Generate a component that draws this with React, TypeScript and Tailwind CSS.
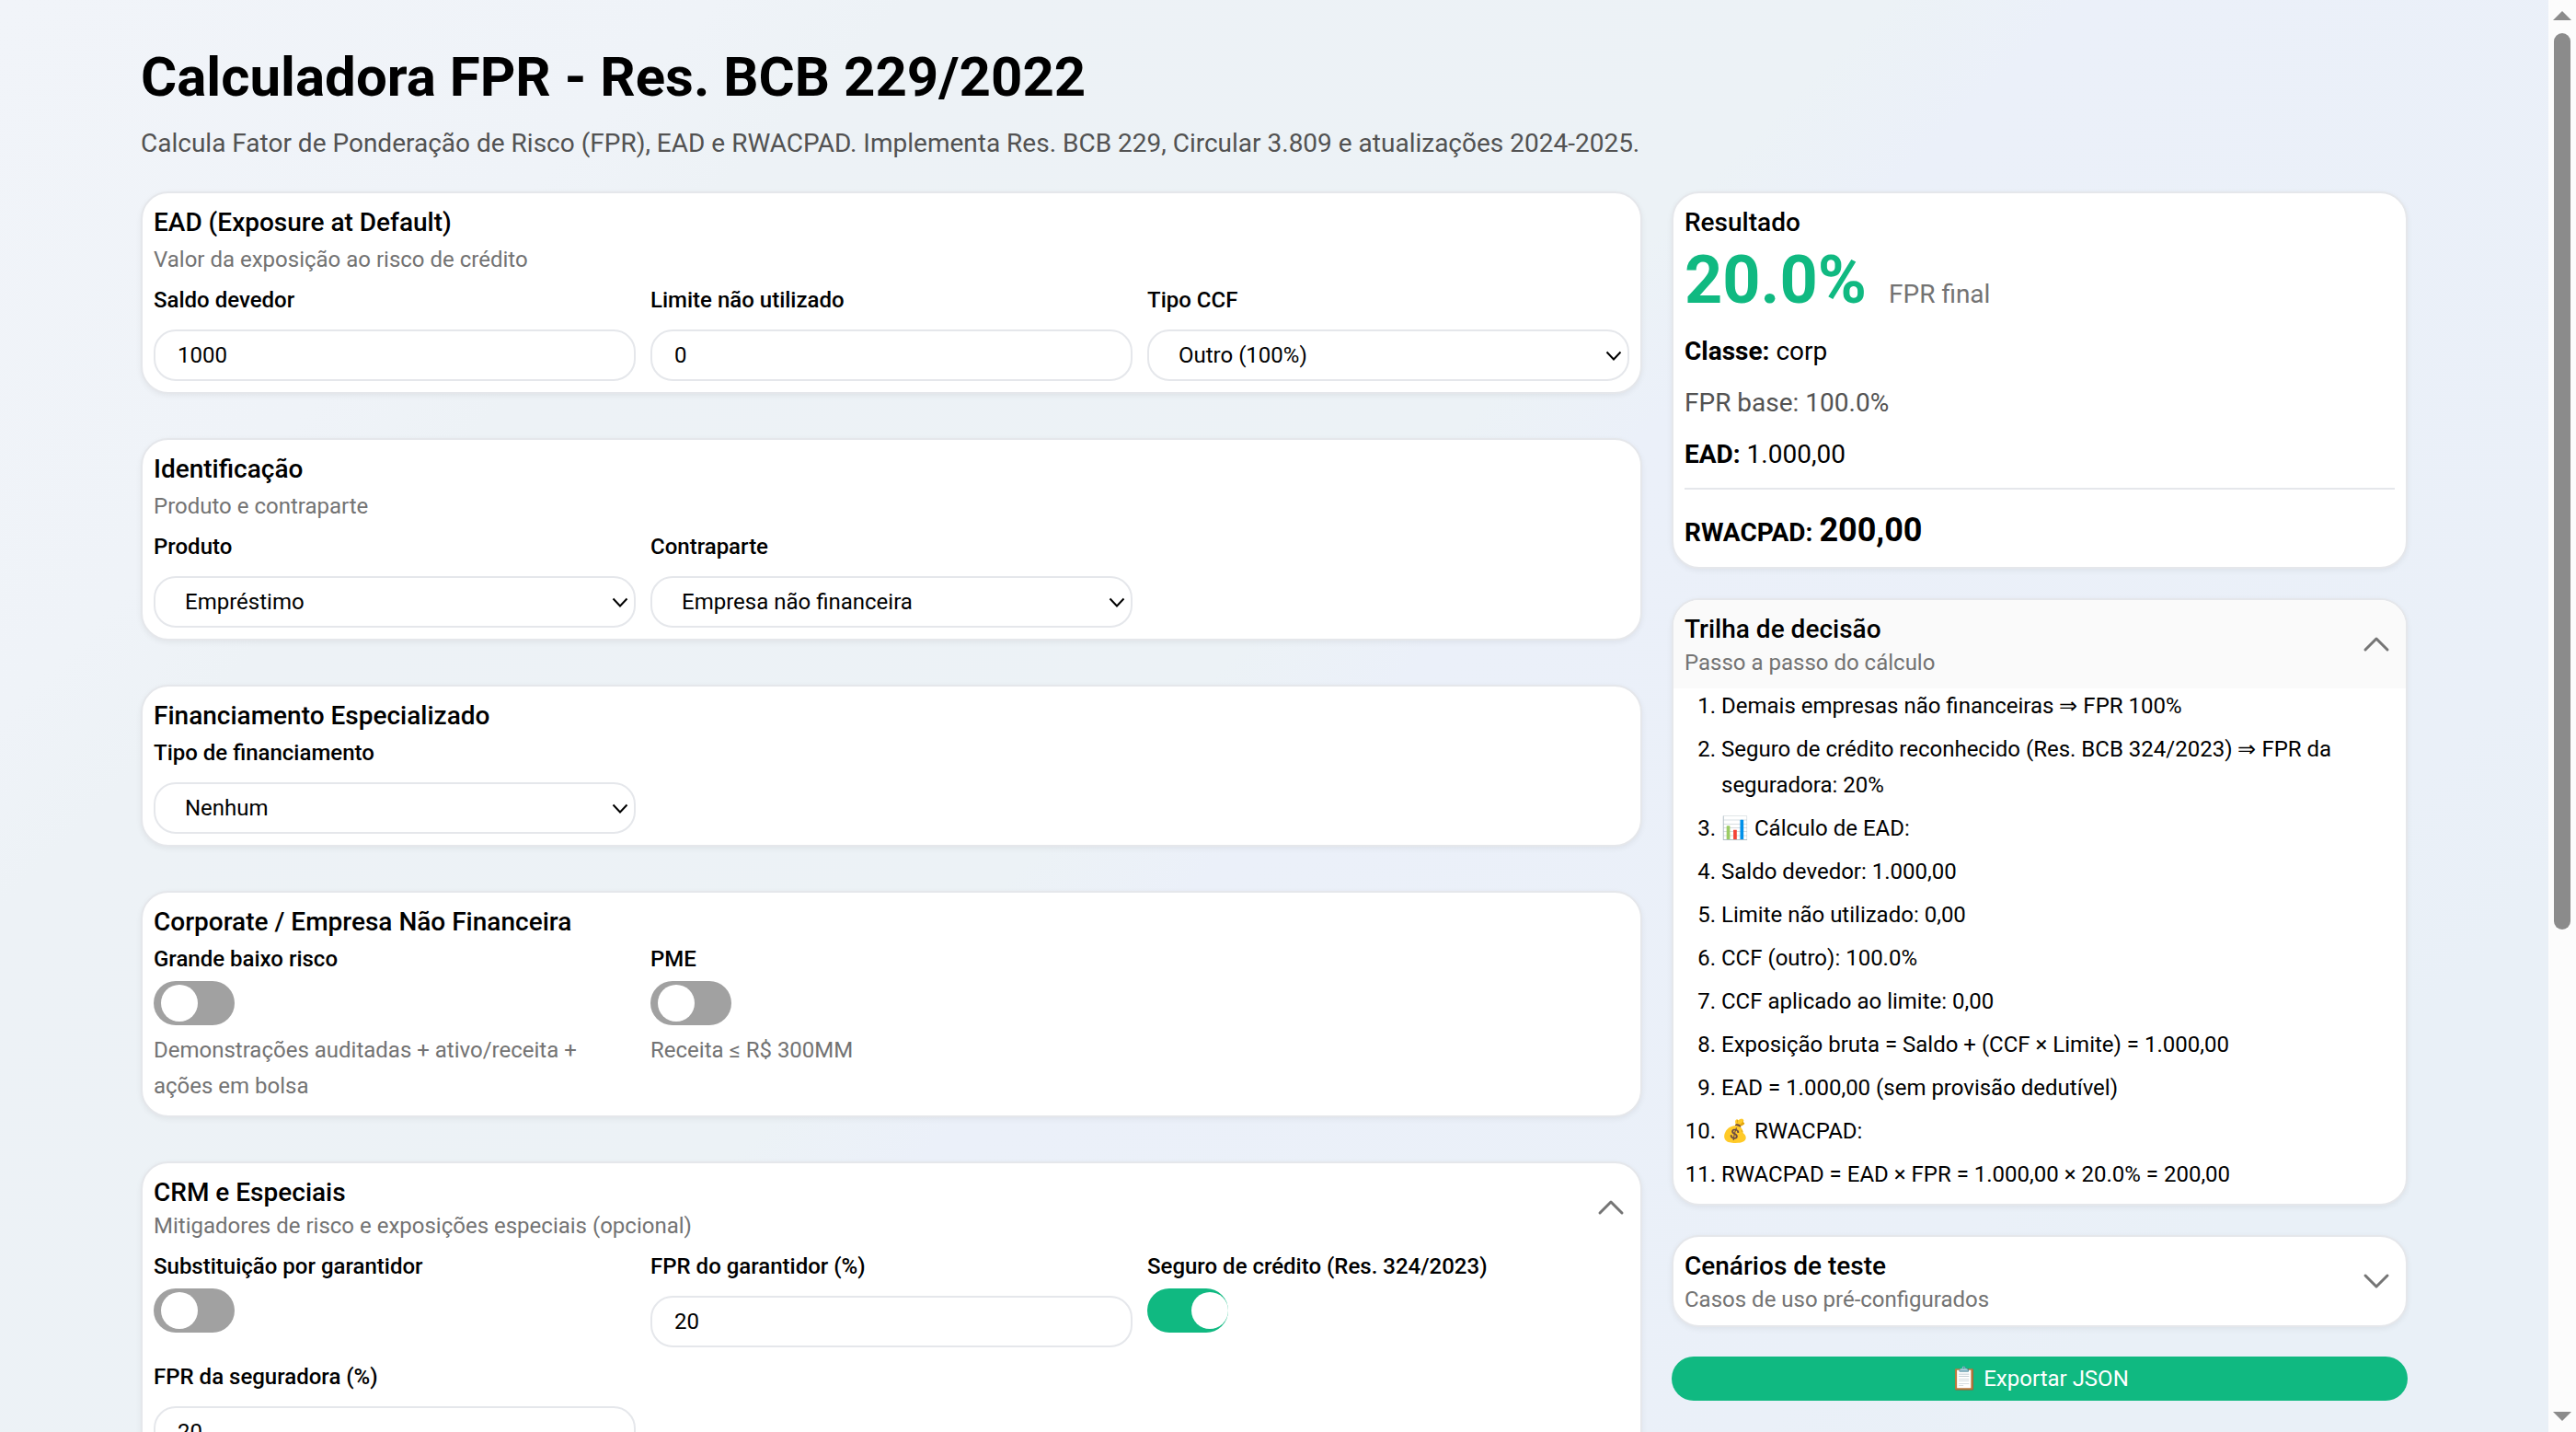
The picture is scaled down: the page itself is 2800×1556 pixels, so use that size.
import { useId, useState, type ReactNode } from 'react';

const cardClass =
  'overflow-hidden rounded-[30px] border-2 border-gray-200 bg-white shadow-[0_2px_6px_rgba(0,0,0,0.06)]';
const titleClass = 'text-[28px] leading-10 font-medium';
const labelClass = 'block text-2xl leading-10 font-medium';
const controlClass =
  'h-14 w-full rounded-3xl border-2 border-gray-200 bg-white text-2xl text-black outline-none';

function Card({ title, subtitle, children }: { title: string; subtitle?: string; children: ReactNode }) {
  return (
    <section className={`${cardClass} p-3`}>
      <h2 className={titleClass}>{title}</h2>
      {subtitle && <p className="mb-1 text-2xl leading-10 text-neutral-500">{subtitle}</p>}
      {children}
    </section>
  );
}

function FieldGrid({ children }: { children: ReactNode }) {
  return <div className="grid grid-cols-3 gap-x-4 gap-y-3">{children}</div>;
}

function TextField({ label, value }: { label: string; value: string }) {
  const id = useId();
  return (
    <div>
      <label htmlFor={id} className={labelClass}>{label}</label>
      <input id={id} type="text" inputMode="decimal" defaultValue={value} className={`${controlClass} mt-3 block px-6`} />
    </div>
  );
}

function SelectField({ label, options }: { label: string; options: string[] }) {
  const id = useId();
  return (
    <div>
      <label htmlFor={id} className={labelClass}>{label}</label>
      <div className="relative mt-3">
        <select id={id} className={`${controlClass} block appearance-none pr-12 pl-8`}>
          {options.map((o) => (
            <option key={o}>{o}</option>
          ))}
        </select>
        <svg
          viewBox="0 0 20 12"
          className="pointer-events-none absolute top-[23px] right-[7px] h-3 w-5"
          fill="none"
          stroke="#000"
          strokeWidth="2"
          aria-hidden="true"
        >
          <path d="M2.500 1.500 10 9.500 17.500 1.500" />
        </svg>
      </div>
    </div>
  );
}

function ToggleField({ label, help, on = false }: { label: string; help?: string; on?: boolean }) {
  const id = useId();
  return (
    <div>
      <label htmlFor={id} className={labelClass}>{label}</label>
      <input
        id={id}
        type="checkbox"
        role="switch"
        defaultChecked={on}
        className="mt-1 block h-12 w-22 cursor-pointer appearance-none rounded-full bg-neutral-400 py-1 pl-2 before:block before:size-10 before:rounded-full before:bg-white before:content-[''] checked:bg-[#10b981] checked:pl-12"
      />
      {help && <p className="mt-2 text-2xl leading-[39px] text-neutral-500">{help}</p>}
    </div>
  );
}

function PanelHeader({ title, subtitle, open, onToggle, className }: {
  title: string;
  subtitle: string;
  open: boolean;
  onToggle: () => void;
  className: string;
}) {
  return (
    <button
      type="button"
      aria-expanded={open}
      onClick={onToggle}
      className={`flex w-full items-center justify-between px-3 pt-[13px] text-left ${className}`}
    >
      <span>
        <span className="block text-[28px] leading-[38px] font-medium">{title}</span>
        <span className="block text-2xl leading-[34px] text-neutral-500">{subtitle}</span>
      </span>
      <svg
        viewBox="0 0 40 40"
        className="size-10"
        fill="none"
        stroke="#757575"
        strokeWidth="3"
        strokeLinecap="round"
        strokeLinejoin="round"
        aria-hidden="true"
      >
        <path d={open ? 'M8 25 20 13 32 25' : 'M8 13 20 25 32 13'} />
      </svg>
    </button>
  );
}

const steps = [
  'Demais empresas não financeiras ⇒ FPR 100%',
  'Seguro de crédito reconhecido (Res. BCB 324/2023) ⇒ FPR da seguradora: 20%',
  '📊 Cálculo de EAD:',
  'Saldo devedor: 1.000,00',
  'Limite não utilizado: 0,00',
  'CCF (outro): 100.0%',
  'CCF aplicado ao limite: 0,00',
  'Exposição bruta = Saldo + (CCF × Limite) = 1.000,00',
  'EAD = 1.000,00 (sem provisão dedutível)',
  '💰 RWACPAD:',
  'RWACPAD = EAD × FPR = 1.000,00 × 20.0% = 200,00',
];

function Scrollbar() {
  return (
    <div className="flex w-[30px] shrink-0 flex-col items-center bg-[#fcfcfc] py-3" aria-hidden="true">
      <svg viewBox="0 0 20 10" className="h-2.5 w-5" fill="#8b8b8b">
        <path d="M10 0 20 10H0z" />
      </svg>
      <div className="mt-3.5 flex w-[18px] flex-1 flex-col">
        <div className="h-[65%] rounded-full bg-[#8b8b8b]" />
      </div>
      <svg viewBox="0 0 20 10" className="h-2.5 w-5" fill="#8b8b8b">
        <path d="M0 0H20L10 10z" />
      </svg>
    </div>
  );
}

export default function App() {
  const [crmOpen, setCrmOpen] = useState(true);
  const [trailOpen, setTrailOpen] = useState(true);
  const [casesOpen, setCasesOpen] = useState(false);

  return (
    <div className="flex h-screen font-['Roboto',sans-serif] text-black">
      <div className="min-w-0 flex-1 overflow-y-auto bg-[linear-gradient(135deg,#f1f4f9_0px,#eff3f8_550px,#edf2f6_700px,#ecf2f6_1450px,#ebf0f9_1600px,#eaf0f8_2450px,#e9f0f7_2650px)] [scrollbar-width:none]">
        <div className="mx-auto max-w-[2560px] px-12 py-12">
          <h1 className="mb-3 text-6xl leading-[72px] font-bold">Calculadora FPR - Res. BCB 229/2022</h1>
          <p className="mb-7 text-[28px] leading-[48px] text-neutral-600">
            Calcula Fator de Ponderação de Risco (FPR), EAD e RWACPAD. Implementa Res. BCB 229, Circular 3.809 e
            atualizações 2024-2025.
          </p>

          <div className="grid grid-cols-[minmax(0,1fr)_800px] items-start gap-8">
            <main className="flex flex-col gap-12">
              <Card title="EAD (Exposure at Default)" subtitle="Valor da exposição ao risco de crédito">
                <FieldGrid>
                  <TextField label="Saldo devedor" value="1000" />
                  <TextField label="Limite não utilizado" value="0" />
                  <SelectField label="Tipo CCF" options={['Outro (100%)']} />
                </FieldGrid>
              </Card>

              <Card title="Identificação" subtitle="Produto e contraparte">
                <FieldGrid>
                  <SelectField label="Produto" options={['Empréstimo']} />
                  <SelectField label="Contraparte" options={['Empresa não financeira']} />
                </FieldGrid>
              </Card>

              <Card title="Financiamento Especializado">
                <FieldGrid>
                  <SelectField label="Tipo de financiamento" options={['Nenhum']} />
                </FieldGrid>
              </Card>

              <Card title="Corporate / Empresa Não Financeira">
                <FieldGrid>
                  <ToggleField label="Grande baixo risco" help="Demonstrações auditadas + ativo/receita + ações em bolsa" />
                  <ToggleField label="PME" help="Receita ≤ R$ 300MM" />
                </FieldGrid>
              </Card>

              <section className={cardClass}>
                <PanelHeader
                  title="CRM e Especiais"
                  subtitle="Mitigadores de risco e exposições especiais (opcional)"
                  open={crmOpen}
                  onToggle={() => setCrmOpen(!crmOpen)}
                  className="pb-[7px]"
                />
                {crmOpen && (
                  <div className="px-3 pb-3">
                    <FieldGrid>
                      <ToggleField label="Substituição por garantidor" />
                      <TextField label="FPR do garantidor (%)" value="20" />
                      <ToggleField label="Seguro de crédito (Res. 324/2023)" on />
                      <TextField label="FPR da seguradora (%)" value="20" />
                    </FieldGrid>
                  </div>
                )}
              </section>
            </main>

            <aside className="flex flex-col gap-8">
              <section className={`${cardClass} p-3`}>
                <h2 className={titleClass}>Resultado</h2>
                <p className="flex items-baseline gap-6">
                  <strong className="text-7xl leading-[86px] font-bold text-[#10b981]">20.0%</strong>
                  <span className="text-[28px] leading-10 text-neutral-500">FPR final</span>
                </p>
                <div className="mt-3 flex flex-col gap-3 text-[28px] leading-[44px]">
                  <p><strong className="font-bold">Classe:</strong> corp</p>
                  <p className="text-neutral-600">FPR base: 100.0%</p>
                  <p><strong className="font-bold">EAD:</strong> 1.000,00</p>
                </div>
                <p className="mt-3.5 border-t-2 border-gray-200 pt-4 text-4xl leading-[56px] font-bold">
                  <span className="text-[28px] leading-none">RWACPAD: </span>200,00
                </p>
              </section>

              <section className={cardClass}>
                <PanelHeader
                  title="Trilha de decisão"
                  subtitle="Passo a passo do cálculo"
                  open={trailOpen}
                  onToggle={() => setTrailOpen(!trailOpen)}
                  className="bg-neutral-50 pb-[11px]"
                />
                {trailOpen && (
                  <ol className="flex list-decimal flex-col gap-2 pr-3 pb-3 pl-[52px] text-2xl leading-[39px]">
                    {steps.map((s) => (
                      <li key={s}>{s}</li>
                    ))}
                  </ol>
                )}
              </section>

              <section className={cardClass}>
                <PanelHeader
                  title="Cenários de teste"
                  subtitle="Casos de uso pré-configurados"
                  open={casesOpen}
                  onToggle={() => setCasesOpen(!casesOpen)}
                  className="pb-[11px]"
                />
              </section>

              <button type="button" className="h-12 rounded-3xl bg-[#10b981] text-2xl text-white">
                📋 Exportar JSON
              </button>
            </aside>
          </div>
        </div>
      </div>
      <Scrollbar />
    </div>
  );
}
